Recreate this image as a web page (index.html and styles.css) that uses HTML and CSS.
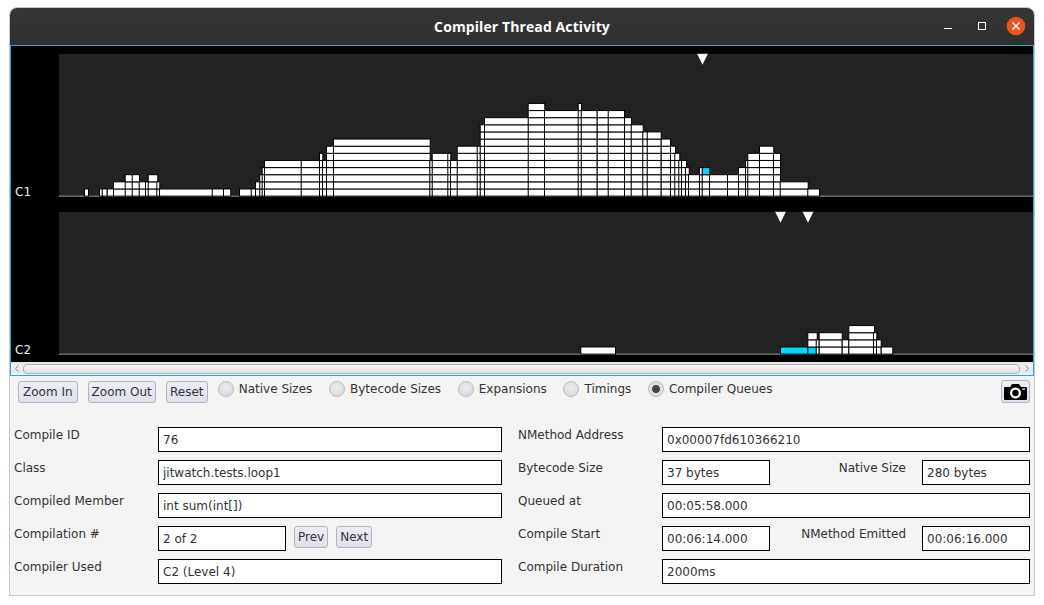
FILE: index.html
```html
<!DOCTYPE html>
<html lang="en">
<head>
    <meta charset="UTF-8">
    <title>Compiler Thread Activity</title>
    <link rel="stylesheet" href="styles.css">
</head>
<body>

    <div class="window">
        <div class="titlebar">
            <span class="title">Compiler Thread Activity</span>
            <div class="window-controls">
                <svg class="win-icon" width="96" height="37" viewBox="0 0 96 37">
                    <rect x="6" y="20" width="8" height="1" fill="#fff"/>
                    <rect x="40.5" y="14.5" width="7" height="7" fill="none" stroke="#fff"/>
                    <circle cx="78" cy="18" r="9.3" fill="#e95420"/>
                    <path d="M74.5 14.5l7 7M81.5 14.5l-7 7" stroke="#fff" stroke-width="1.3" fill="none"/>
                </svg>
            </div>
        </div>

        <div class="timeline">
            <svg id="chart" class="chart" width="1022" height="316" viewBox="11 46 1022 316">
                <rect x="59" y="54" width="974" height="143" fill="#222"/>
                <rect x="59" y="212" width="974" height="143" fill="#222"/>
                <rect x="59" y="195.4" width="974" height="1.6" fill="#666"/>
                <rect x="59" y="353.4" width="974" height="1.6" fill="#666"/>
                <g id="blocks"></g>
                <polygon class="marker" points="696.6,53.6 708.4,53.6 702.5,65.4"/>
                <polygon class="marker" points="774.6,211.6 786.4,211.6 780.5,223.4"/>
                <polygon class="marker" points="802.1,211.6 813.9,211.6 808,223.4"/>
                <text class="thread-label" x="15" y="196">C1</text>
                <text class="thread-label" x="15" y="354">C2</text>
            </svg>
            <div class="scrollbar">
                <svg class="arrow" width="12" height="13" viewBox="0 0 12 13"><path d="M7.5 3.5L4.5 6.5l3 3" fill="none" stroke="#888"/></svg>
                <div class="thumb"></div>
                <svg class="arrow" width="13" height="13" viewBox="0 0 13 13"><path d="M5.5 3.5l3 3-3 3" fill="none" stroke="#888"/></svg>
            </div>
        </div>

        <div class="toolbar">
            <button class="btn">Zoom In</button>
            <button class="btn tight">Zoom Out</button>
            <button class="btn tight reset">Reset</button>
            <div class="radios">
                <label class="radio"><input type="radio" name="mode">Native Sizes</label>
                <label class="radio"><input type="radio" name="mode">Bytecode Sizes</label>
                <label class="radio"><input type="radio" name="mode">Expansions</label>
                <label class="radio"><input type="radio" name="mode">Timings</label>
                <label class="radio"><input type="radio" name="mode" checked>Compiler Queues</label>
            </div>
            <button class="btn camera" aria-label="Snapshot">
                <svg width="23" height="16" viewBox="0 0 23 16">
                    <path d="M1 3h5l2-3h7l2 3h5a1 1 0 0 1 1 1v11a1 1 0 0 1-1 1H1a1 1 0 0 1-1-1V4a1 1 0 0 1 1-1z" fill="#000"/>
                    <circle cx="11.5" cy="9" r="5.5" fill="#fff"/>
                    <circle cx="11.5" cy="9" r="3.2" fill="#000"/>
                    <rect x="18" y="4.5" width="3" height="1.2" fill="#fff"/>
                </svg>
            </button>
        </div>

        <div class="details">
            <div class="column">
                <div class="row">
                    <label class="name">Compile ID</label>
                    <input class="field" type="text" value="76" readonly>
                </div>
                <div class="row">
                    <label class="name">Class</label>
                    <input class="field" type="text" value="jitwatch.tests.loop1" readonly>
                </div>
                <div class="row">
                    <label class="name">Compiled Member</label>
                    <input class="field" type="text" value="int sum(int[])" readonly>
                </div>
                <div class="row">
                    <label class="name">Compilation #</label>
                    <input class="field count" type="text" value="2 of 2" readonly>
                    <button class="btn nav">Prev</button>
                    <button class="btn nav">Next</button>
                </div>
                <div class="row">
                    <label class="name">Compiler Used</label>
                    <input class="field" type="text" value="C2 (Level 4)" readonly>
                </div>
            </div>

            <div class="column">
                <div class="row">
                    <label class="name">NMethod Address</label>
                    <input class="field" type="text" value="0x00007fd610366210" readonly>
                </div>
                <div class="row">
                    <label class="name">Bytecode Size</label>
                    <input class="field short" type="text" value="37 bytes" readonly>
                    <label class="name side">Native Size</label>
                    <input class="field short" type="text" value="280 bytes" readonly>
                </div>
                <div class="row">
                    <label class="name">Queued at</label>
                    <input class="field" type="text" value="00:05:58.000" readonly>
                </div>
                <div class="row">
                    <label class="name">Compile Start</label>
                    <input class="field short" type="text" value="00:06:14.000" readonly>
                    <label class="name side">NMethod Emitted</label>
                    <input class="field short" type="text" value="00:06:16.000" readonly>
                </div>
                <div class="row">
                    <label class="name">Compile Duration</label>
                    <input class="field" type="text" value="2000ms" readonly>
                </div>
            </div>
        </div>
    </div>

    <script src="chart.js"></script>
</body>
</html>
```

FILE: styles.css
```css
body {
    margin: 0;
    background-color: #fff;
    font-family: "DejaVu Sans", sans-serif;
    font-size: 12px;
    color: #333;
}

.window {
    width: 1024px;
    height: 587px;
    margin: 7px 0 0 9px;
    border: 1px solid #c8c8c8;
    border-radius: 8px 8px 0 0;
    background-color: #f4f4f4;
    display: flex;
    flex-direction: column;
}

.titlebar {
    position: relative;
    height: 37px;
    flex: none;
    display: flex;
    align-items: center;
    justify-content: center;
    background: linear-gradient(#353535, #302f2f);
    border-radius: 7px 7px 0 0;
}

.title {
    font-family: "Open Sans", sans-serif;
    font-size: 14px;
    font-weight: 700;
    letter-spacing: 0.1px;
    color: #fff;
}

.window-controls {
    position: absolute;
    top: 0;
    right: 0;
    height: 37px;
}

.win-icon {
    display: block;
}

.timeline {
    flex: none;
    height: 329px;
    border: 1px solid #2aa5d8;
    background-color: #000;
}

.chart {
    display: block;
}

.block {
    fill: #fff;
    stroke: #000;
    stroke-width: 1;
}

.block.active {
    fill: #00d8ff;
}

.marker {
    fill: #fff;
    stroke: #000;
    stroke-width: 0.6;
}

.thread-label {
    fill: #eee;
    font-size: 12px;
    font-family: "DejaVu Sans", sans-serif;
}

.scrollbar {
    height: 13px;
    display: flex;
    align-items: center;
    background: linear-gradient(#e4e4e4, #f0f0f0 30%, #e6e6e6 75%, #b4b4b4 76%, #ececec 80%);
}

.arrow {
    flex: none;
}

.thumb {
    flex: 1;
    height: 8px;
    border: 1px solid #b0b0b0;
    border-radius: 4px;
    background: linear-gradient(#f6f6f6, #e2e2e2);
}

.toolbar {
    flex: none;
    height: 51px;
    box-sizing: border-box;
    padding: 5px 4px 0 8px;
    display: flex;
    align-items: flex-start;
    gap: 10px;
}

.btn {
    height: 22px;
    padding: 0 4px;
    border: 1px solid #b4b4bc;
    border-radius: 3px;
    background: linear-gradient(#eeeef8, #dfdfee);
    font-family: "DejaVu Sans", sans-serif;
    font-size: 12px;
    color: #333;
}

.btn.tight {
    padding: 0 3px;
}

.btn.reset {
    width: 42px;
}

.radios {
    display: flex;
    gap: 16.7px;
    margin-top: -1px;
}

.radio {
    display: flex;
    align-items: center;
    gap: 5px;
    height: 17px;
}

.radio input {
    appearance: none;
    width: 16px;
    height: 16px;
    margin: 0;
    border: 1px solid #bbb;
    border-radius: 50%;
    background: radial-gradient(circle at 50% 40%, #ececec, #d8d8d8);
}

.radio input:checked {
    background: radial-gradient(circle, #444 0 3.5px, #e0e0e0 4.5px);
}

.camera {
    margin: -1px 0 0 auto;
    width: 29px;
    height: 23px;
    padding: 0;
    display: flex;
    align-items: center;
    justify-content: center;
}

.details {
    display: grid;
    grid-template-columns: 488px 512px;
    gap: 16px;
    padding: 0 4px;
}

.column {
    display: flex;
    flex-direction: column;
    gap: 8px;
}

.row {
    display: flex;
    align-items: flex-start;
    height: 25px;
}

.name {
    width: 144px;
    flex: none;
    line-height: 16px;
}

.name.side {
    width: auto;
    margin: 0 16px 0 auto;
}

.field {
    flex: 1;
    min-width: 0;
    height: 25px;
    box-sizing: border-box;
    padding: 0 4px;
    border: 1px solid #000;
    border-radius: 0;
    background-color: #fff;
    font-family: "DejaVu Sans", sans-serif;
    font-size: 12px;
    color: #333;
    outline: none;
}

.field.short {
    flex: none;
    width: 108px;
}

.field.count {
    flex: none;
    width: 128px;
}

.nav {
    margin-left: 8px;
    padding: 0 3px;
}
```

FILE: chart.js
```js
// each column is [left, right, levels, cyan level (optional)]
var c1 = [
    [85, 88, 1], [100, 102.3, 1], [102.7, 106.7, 1], [107.7, 113.3, 1],
    [114, 125, 2], [125.7, 132, 3], [132.7, 139, 3], [139.7, 146, 2],
    [146, 148, 2], [148.7, 157.3, 3], [157.3, 159.3, 2], [160, 212, 1],
    [212.7, 223.3, 1], [224, 230.3, 1], [240, 251, 1], [251.7, 255.3, 1],
    [256, 259.7, 2], [260.3, 262.7, 3], [262.7, 264.3, 4], [265, 301, 5],
    [301.7, 319.3, 5], [320, 322.3, 6], [323, 326, 5], [327, 333, 7],
    [334, 429.7, 8], [430.3, 432, 5], [432.7, 448.3, 6], [448.3, 450.3, 6],
    [451, 457, 5], [457.7, 477.7, 7], [477.7, 480, 7], [480.7, 484.3, 10],
    [485, 528, 11], [528.7, 544.3, 13], [545, 578.7, 12], [578.7, 581, 13],
    [581.7, 596.7, 12], [597.7, 608, 12], [608.7, 624, 12], [625, 631, 11],
    [631.7, 642.7, 10], [643.3, 647, 9], [647.7, 660.7, 9], [661.7, 670, 8],
    [671, 675, 7], [675.3, 679.3, 6], [679.3, 681.5, 5], [682, 686, 5],
    [686, 688.7, 4], [689, 700, 3], [700, 702, 4], [702.7, 709.3, 4, 4],
    [710, 727.3, 3], [728, 738.3, 3], [739, 746, 4], [746, 747.7, 5],
    [748.3, 759.3, 6], [760, 773.3, 7], [774, 780, 6], [780.7, 807.7, 2],
    [808.3, 819, 1]
];

var c2 = [
    [581.3, 615, 1], [781, 807.3, 1, 1], [808.3, 816.7, 3, 1], [816.7, 818.7, 2],
    [819.7, 841.7, 3], [842.7, 848.3, 2], [849.3, 874, 4], [874, 876.3, 3],
    [877, 880.7, 2], [881.7, 892.3, 1]
];

var ROW_HEIGHT = 7.13;

function drawColumns(columns, base) {
    var group = document.getElementById('blocks');
    columns.forEach(function (col) {
        for (var level = 1; level <= col[2]; level++) {
            var rect = document.createElementNS('http://www.w3.org/2000/svg', 'rect');
            rect.setAttribute('class', level === col[3] ? 'block active' : 'block');
            rect.setAttribute('x', col[0] - 0.5);
            rect.setAttribute('y', base - level * ROW_HEIGHT);
            rect.setAttribute('width', col[1] - col[0] + 1);
            rect.setAttribute('height', ROW_HEIGHT);
            group.appendChild(rect);
        }
    });
}

drawColumns(c1, 196.1);
drawColumns(c2, 354.1);
```
